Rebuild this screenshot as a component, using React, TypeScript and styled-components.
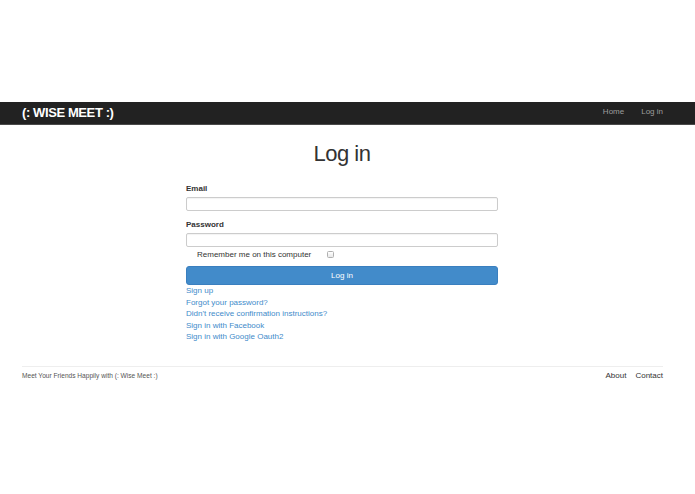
import React, { useState } from 'react';
import styled, { createGlobalStyle } from 'styled-components';

const GlobalStyle = createGlobalStyle`
  html, body {
    margin: 0;
    padding: 0;
    background: #ffffff;
  }
  body {
    font-family: "Liberation Sans", Arial, sans-serif;
    font-size: 8px;
    line-height: 11.4px;
    color: #333333;
  }
  * {
    box-sizing: border-box;
  }
`;

const Page = styled.div`
  padding-top: 102px;
  min-height: 494px;
`;

const Navbar = styled.nav`
  background: #222222;
  border-bottom: 1px solid #4a4a4a;
  height: 23px;
`;

const NavInner = styled.div`
  height: 100%;
  padding: 0 32px 0 22px;
  display: flex;
  align-items: center;
  justify-content: space-between;
`;

const Brand = styled.a`
  color: #ffffff;
  font-size: 13px;
  font-weight: bold;
  letter-spacing: -0.4px;
  text-decoration: none;
  line-height: 1;
  margin-top: -1px;
`;

const NavLinks = styled.div`
  display: flex;
  gap: 17px;
  margin-top: -2px;
`;

const NavLink = styled.a`
  color: #9d9d9d;
  font-size: 8px;
  text-decoration: none;
`;

const Container = styled.div`
  padding: 0 33px 0 22px;
`;

const Title = styled.h1`
  margin: 17px 0 17px;
  font-size: 22px;
  line-height: 24.2px;
  font-weight: normal;
  letter-spacing: -0.5px;
  text-align: center;
  color: #333333;
`;

const Form = styled.form`
  width: 312px;
  margin: 0 auto;
`;

const Label = styled.label`
  display: block;
  font-weight: bold;
  margin-bottom: 2px;
`;

const Field = styled.div<{ $gap?: number }>`
  margin-bottom: ${({ $gap }) => $gap ?? 0}px;
`;

const Input = styled.input`
  display: block;
  width: 100%;
  height: 14px;
  padding: 0 4px;
  border: 1px solid #cccccc;
  border-radius: 2px;
  font-size: 8px;
  font-family: inherit;
  outline: none;
  box-shadow: inset 0 1px 1px rgba(0, 0, 0, 0.05);
`;

const CheckRow = styled.label`
  display: flex;
  align-items: center;
  padding-left: 11px;
  margin-top: 2.5px;
  margin-bottom: 6px;
`;

const CheckBox = styled.input`
  appearance: none;
  width: 7px;
  height: 7px;
  margin: 0 0 0 16px;
  border: 1px solid #b0b0b0;
  border-radius: 1.5px;
  background: linear-gradient(#ffffff, #e8e8e8);
  position: relative;
  top: -0.5px;

  &:checked {
    background: #428bca;
    border-color: #357ebd;
  }
`;

const SubmitButton = styled.button`
  display: block;
  width: 100%;
  height: 19px;
  padding: 0;
  background: #428bca;
  border: 1px solid #3a7fbf;
  border-radius: 3px;
  color: #ffffff;
  font-family: inherit;
  font-size: 8px;
  cursor: pointer;
`;

const LinkList = styled.div`
  display: flex;
  flex-direction: column;
  align-items: flex-start;
`;

const TextLink = styled.a`
  color: #428bca;
  text-decoration: none;
`;

const Footer = styled.footer`
  margin-top: 24px;
  border-top: 1px solid #eeeeee;
  padding-top: 3px;
  display: flex;
  align-items: center;
  justify-content: space-between;
  margin-right: -1px;
`;

const FooterNote = styled.p`
  margin: 0;
  font-size: 6.6px;
  color: #555555;
`;

const FooterLinks = styled.div`
  display: flex;
  gap: 9px;
`;

const FooterLink = styled.a`
  color: #333333;
  text-decoration: none;
`;

const formLinks = [
  'Sign up',
  'Forgot your password?',
  "Didn't receive confirmation instructions?",
  'Sign in with Facebook',
  'Sign in with Google Oauth2',
];

const App: React.FC = () => {
  const [email, setEmail] = useState('');
  const [password, setPassword] = useState('');
  const [remember, setRemember] = useState(false);

  const handleSubmit = (e: React.FormEvent<HTMLFormElement>) => {
    e.preventDefault();
  };

  return (
    <>
      <GlobalStyle />
      <Page>
        <Navbar>
          <NavInner>
            <Brand href="#">(: WISE MEET :)</Brand>
            <NavLinks>
              <NavLink href="#">Home</NavLink>
              <NavLink href="#">Log in</NavLink>
            </NavLinks>
          </NavInner>
        </Navbar>

        <Container>
          <Title>Log in</Title>
          <Form onSubmit={handleSubmit}>
            <Field $gap={8.5}>
              <Label htmlFor="email">Email</Label>
              <Input
                id="email"
                type="email"
                value={email}
                onChange={(e: React.ChangeEvent<HTMLInputElement>) => setEmail(e.target.value)}
              />
            </Field>
            <Field>
              <Label htmlFor="password">Password</Label>
              <Input
                id="password"
                type="password"
                value={password}
                onChange={(e: React.ChangeEvent<HTMLInputElement>) => setPassword(e.target.value)}
              />
            </Field>
            <CheckRow>
              Remember me on this computer
              <CheckBox
                type="checkbox"
                checked={remember}
                onChange={(e: React.ChangeEvent<HTMLInputElement>) => setRemember(e.target.checked)}
              />
            </CheckRow>
            <SubmitButton type="submit">Log in</SubmitButton>
            <LinkList>
              {formLinks.map((text) => (
                <TextLink key={text} href="#">
                  {text}
                </TextLink>
              ))}
            </LinkList>
          </Form>

          <Footer>
            <FooterNote>Meet Your Friends Happily with (: Wise Meet :)</FooterNote>
            <FooterLinks>
              <FooterLink href="#">About</FooterLink>
              <FooterLink href="#">Contact</FooterLink>
            </FooterLinks>
          </Footer>
        </Container>
      </Page>
    </>
  );
};

export default App;
